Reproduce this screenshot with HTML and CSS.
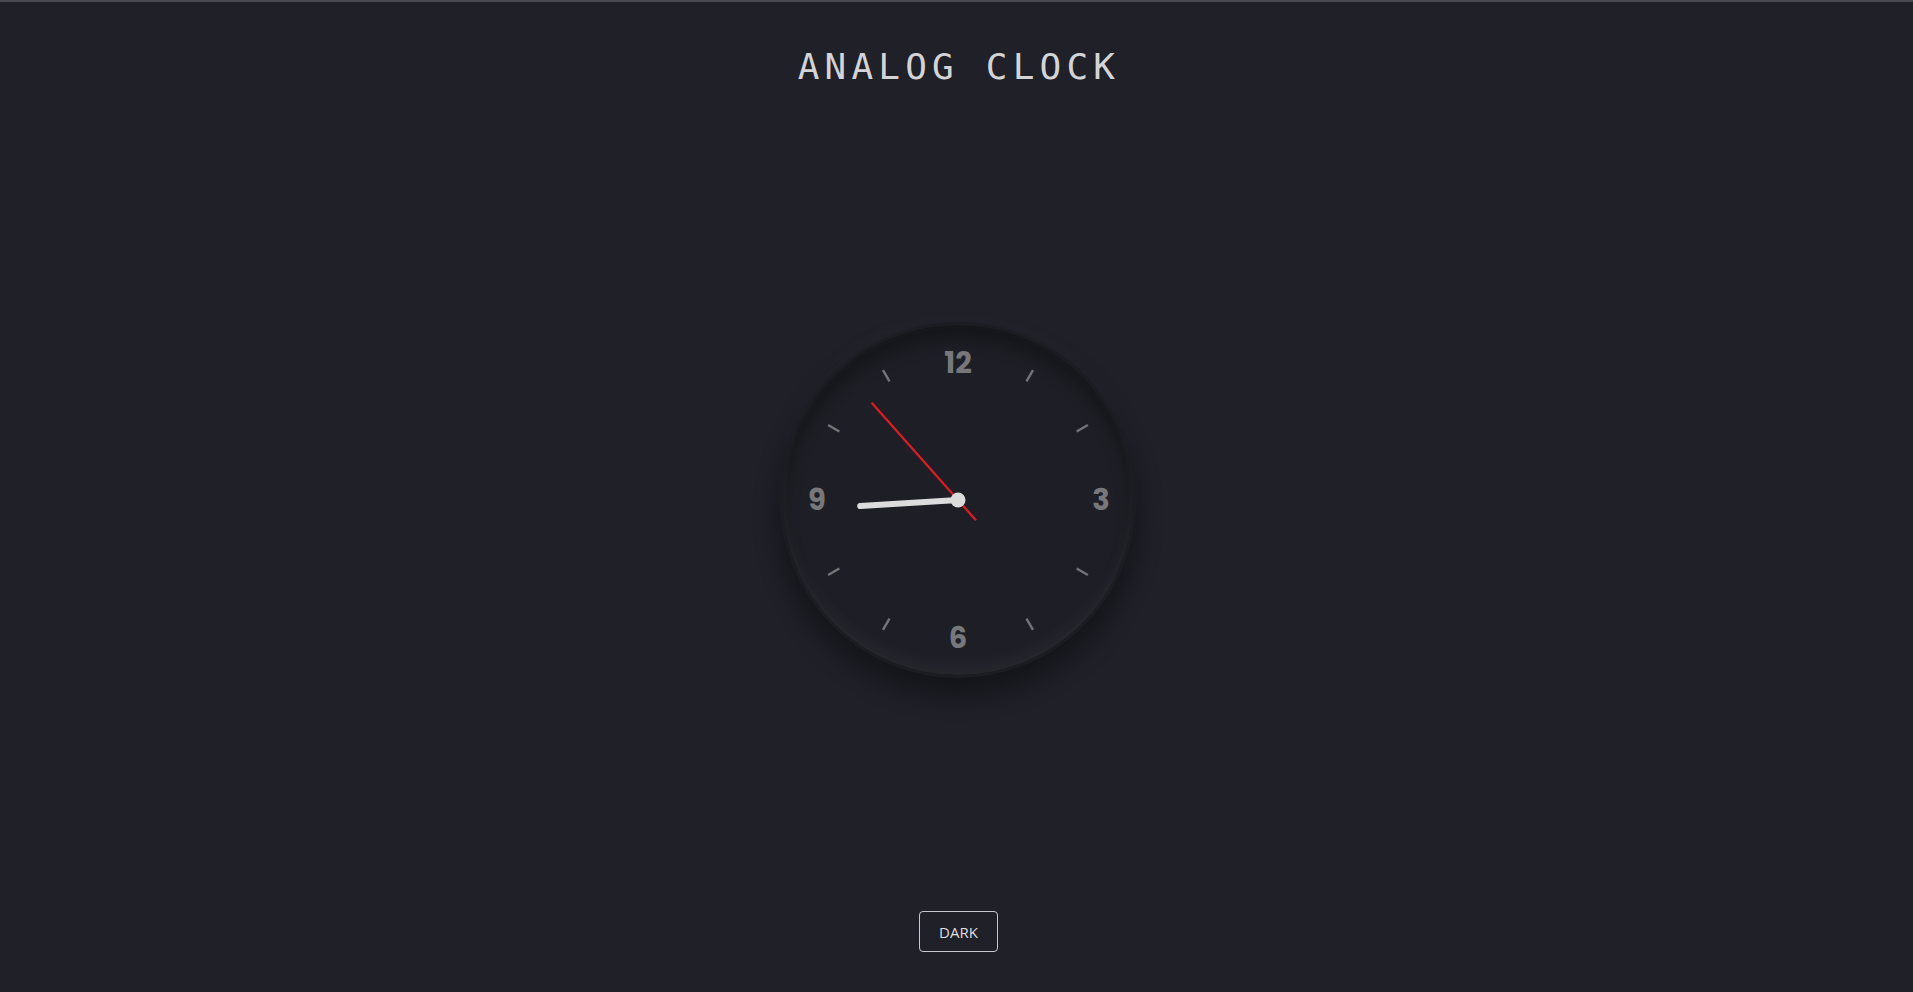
FILE: index.html
```html
<!DOCTYPE html>
<html lang="en">
<head>
<meta charset="utf-8">
<title>Analog Clock</title>
<link rel="stylesheet" href="styles.css">
</head>
<body>
<div class="page">
  <h1 class="title">ANALOG CLOCK</h1>
  <div class="stage">
    <div class="clock">
      <svg class="face" width="350" height="350" viewBox="0 0 350 350">
        <g class="ticks">
          <line x1="175" y1="38" x2="175" y2="25" transform="rotate(30 175 175)"/>
          <line x1="175" y1="38" x2="175" y2="25" transform="rotate(60 175 175)"/>
          <line x1="175" y1="38" x2="175" y2="25" transform="rotate(120 175 175)"/>
          <line x1="175" y1="38" x2="175" y2="25" transform="rotate(150 175 175)"/>
          <line x1="175" y1="38" x2="175" y2="25" transform="rotate(210 175 175)"/>
          <line x1="175" y1="38" x2="175" y2="25" transform="rotate(240 175 175)"/>
          <line x1="175" y1="38" x2="175" y2="25" transform="rotate(300 175 175)"/>
          <line x1="175" y1="38" x2="175" y2="25" transform="rotate(330 175 175)"/>
        </g>
        <g class="nums">
          <text x="175" y="38">12</text>
          <text x="318" y="175">3</text>
          <text x="175" y="313">6</text>
          <text x="34" y="175">9</text>
        </g>
        <line class="hour" x1="175" y1="175" x2="175" y2="77" transform="rotate(266.5 175 175)"/>
        <line class="second" x1="175" y1="202" x2="175" y2="45" transform="rotate(318.4 175 175)"/>
        <circle class="pin" cx="175" cy="175" r="7.5"/>
      </svg>
    </div>
  </div>
  <button class="mode" type="button">DARK</button>
</div>
</body>
</html>
```
FILE: styles.css
```css
* { box-sizing: border-box; }
html, body { margin: 0; padding: 0; }
body {
  background: #1f2028;
  color: #d6d6d6;
  font-family: "Liberation Sans", Arial, sans-serif;
  overflow: hidden;
}
.page {
  height: 992px;
  border-top: 2px solid #4a4a50;
  display: flex;
  flex-direction: column;
  align-items: center;
}
.title {
  margin: 47px 0 0;
  font-family: "DejaVu Sans Mono", monospace;
  font-weight: 400;
  font-size: 36px;
  line-height: 36px;
  letter-spacing: 5.2px;
  padding-left: 5px;
  color: #d4d4d6;
}
.stage {
  flex: 1;
  display: flex;
  align-items: center;
  justify-content: center;
  padding-top: 4px;
  padding-left: 3px;
}
.clock {
  width: 356px;
  height: 356px;
  border-radius: 50%;
  border: 3px solid #1c1d23;
  background: #1e1f26;
  box-shadow:
    0 -10px 20px rgba(255, 255, 255, 0.02),
    inset 0 -12px 14px rgba(255, 255, 255, 0.03),
    inset 0 0 0 3px rgba(255, 255, 255, 0.012),
    0 16px 26px rgba(0, 0, 0, 0.38),
    inset 0 14px 16px rgba(0, 0, 0, 0.32);
}
.face { display: block; }
.ticks line {
  stroke: #747478;
  stroke-width: 2.4;
}
.nums text {
  fill: #78787c;
  font-family: "Poppins", "Inter", "Open Sans", sans-serif;
  font-weight: 700;
  font-size: 29px;
  text-anchor: middle;
  dominant-baseline: central;
}
.hour {
  stroke: #dcdcdc;
  stroke-width: 6;
  stroke-linecap: round;
}
.second {
  stroke: #e01b24;
  stroke-width: 2.2;
}
.pin { fill: #dcdcdc; }
.mode {
  margin: 0 0 40px 4px;
  width: 79px;
  height: 41px;
  padding: 0;
  background: transparent;
  border: 1px solid #c8c8cc;
  border-radius: 4px;
  color: #dedede;
  font-family: "Open Sans", "Liberation Sans", sans-serif;
  font-size: 15px;
}
```
